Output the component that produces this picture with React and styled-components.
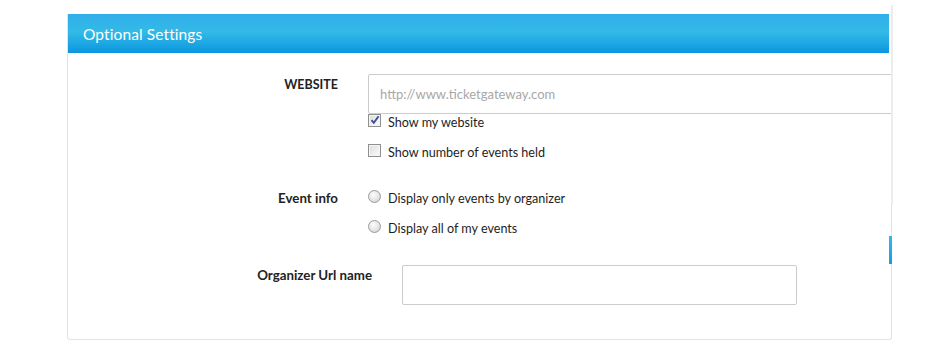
import React from 'react'
import styled, { createGlobalStyle } from 'styled-components'

const GlobalStyle = createGlobalStyle`
  body {
    margin: 0;
    background: #fff;
    font-family: Lato, "Open Sans", sans-serif;
    color: #333;
  }
`

const Page = styled.div`
  position: relative;
  width: 950px;
  height: 350px;
  padding: 14px 0 0 67px;
  box-sizing: border-box;
`

const Rail = styled.div`
  position: absolute;
  left: 891px;
  top: 5px;
  width: 2px;
  height: 200px;
  background: #ececec;
  border-bottom-left-radius: 2px;
`

const Marker = styled.div`
  position: absolute;
  left: 889px;
  top: 236px;
  width: 3px;
  height: 28px;
  background: linear-gradient(#35b8ea, #1a9be0);
`

const Panel = styled.section`
  width: 825px;
  height: 326px;
  box-sizing: border-box;
  border: 1px solid #e4e4e4;
  border-top: none;
  border-radius: 0 0 3px 3px;
  overflow: hidden;
  background: #fff;
`

const Header = styled.div`
  height: 39px;
  margin: 0 2px 0 -1px;
  padding-left: 16px;
  display: flex;
  align-items: center;
  background: linear-gradient(#30aeea 0%, #33bae6 45%, #1ea7e3 75%, #0b95e0 100%);
  color: #fff;
  font-size: 15.5px;
  letter-spacing: 0.1px;
`

const Body = styled.div`
  display: flex;
  flex-direction: column;
  padding: 21px 0 0;
`

const FieldRow = styled.div`
  display: grid;
  grid-template-columns: ${p => p.$labelWidth}px 1fr;
  column-gap: 30px;
  margin-top: ${p => p.$top || 0}px;
`

const Label = styled.div`
  text-align: right;
  font-weight: 700;
  font-size: ${p => (p.$upper ? 12.5 : 13.3)}px;
  line-height: 16px;
  padding-top: ${p => p.$pad || 0}px;
  color: #222;
  text-transform: ${p => (p.$upper ? 'uppercase' : 'none')};
`

const Controls = styled.div`
  display: flex;
  flex-direction: column;
  gap: 14px;
`

const TextInput = styled.input`
  box-sizing: border-box;
  width: ${p => p.$width}px;
  height: ${p => p.$height}px;
  border: 1px solid #cbcbcb;
  border-radius: 2px;
  padding: 0 11px;
  font-family: Lato, "Open Sans", sans-serif;
  font-size: 13px;
  color: #333;
  outline: none;
  &::placeholder {
    color: #a8a8a8;
  }
`

const WebsiteBlock = styled.div`
  display: flex;
  flex-direction: column;
`

const Option = styled.label`
  display: flex;
  align-items: center;
  height: 16px;
  gap: 7px;
  font-size: 12.6px;
  color: #1e1e1e;
  margin-top: ${p => p.$top || 0}px;
`

const Box = styled.span`
  position: relative;
  width: 11px;
  height: 11px;
  border: 1px solid #8e8f8f;
  background: linear-gradient(135deg, #dcdcdc, #fbfbfb);
  box-shadow: inset 0 0 0 1px #f4f4f4;
  flex: none;
  margin-top: -3px;
`

const Tick = styled.svg`
  position: absolute;
  left: 0;
  top: -1px;
`

const Round = styled.span`
  width: 11px;
  height: 11px;
  border-radius: 50%;
  border: 1px solid #9a9a9a;
  background: radial-gradient(circle at 40% 35%, #fdfdfd 0%, #e4e4e4 55%, #c9c9c9 100%);
  flex: none;
  margin-top: -3px;
`

function Checkbox({ checked }) {
  return (
    <Box>
      {checked && (
        <Tick width="12" height="12" viewBox="0 0 12 12">
          <path d="M2.5 6.2 L4.8 8.8 L9.6 2.2" fill="none" stroke="#3a4a9c" strokeWidth="1.8" />
        </Tick>
      )}
    </Box>
  )
}

export default function App() {
  return (
    <Page>
      <GlobalStyle />
      <Rail />
      <Marker />
      <Panel>
        <Header>Optional Settings</Header>
        <Body>
          <FieldRow $labelWidth={270}>
            <Label $upper $pad={3}>Website</Label>
            <WebsiteBlock>
              <TextInput $width={560} $height={40} placeholder="http://www.ticketgateway.com" />
              <Option>
                <Checkbox checked />
                Show my website
              </Option>
              <Option $top={14}>
                <Checkbox />
                Show number of events held
              </Option>
            </WebsiteBlock>
          </FieldRow>
          <FieldRow $labelWidth={270} $top={30}>
            <Label>Event info</Label>
            <Controls>
              <Option>
                <Round />
                Display only events by organizer
              </Option>
              <Option>
                <Round />
                Display all of my events
              </Option>
            </Controls>
          </FieldRow>
          <FieldRow $labelWidth={304} $top={29}>
            <Label $pad={2}>Organizer Url name</Label>
            <div>
              <TextInput $width={395} $height={40} />
            </div>
          </FieldRow>
        </Body>
      </Panel>
    </Page>
  )
}
